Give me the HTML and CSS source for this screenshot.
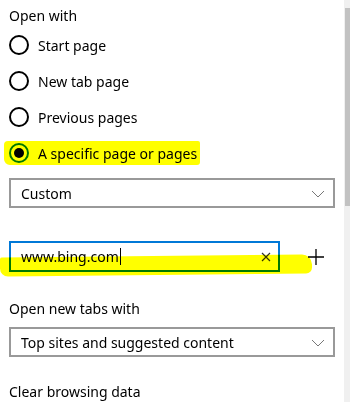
FILE: index.html
```html
<!DOCTYPE html>
<html lang="en">

<head>
    <meta charset="UTF-8" />
    <title>Settings</title>
    <link rel="stylesheet" href="styles.css">
</head>

<body>
    <div class="panel">
        <div class="label first">Open with</div>

        <div class="radio-row">
            <span class="radio"></span>
            <span>Start page</span>
        </div>
        <div class="radio-row">
            <span class="radio"></span>
            <span>New tab page</span>
        </div>
        <div class="radio-row">
            <span class="radio"></span>
            <span>Previous pages</span>
        </div>
        <div class="radio-row marked">
            <span class="radio checked"></span>
            <span>A specific page or pages</span>
            <span class="marker marker-radio"></span>
        </div>

        <div class="select">
            <span>Custom</span>
            <svg class="chevron" width="14" height="8" viewBox="0 0 14 8">
                <polyline points="1,1 7,7 13,1" fill="none" stroke="#777" stroke-width="1" />
            </svg>
        </div>

        <div class="url-row">
            <div class="url-input">
                <span class="url-text">www.bing.com</span><span class="caret"></span>
                <svg class="clear" width="10" height="10" viewBox="0 0 10 10">
                    <path d="M1 1 L9 9 M9 1 L1 9" stroke="#333" stroke-width="1.2" />
                </svg>
            </div>
            <svg class="plus" width="16" height="16" viewBox="0 0 16 16">
                <path d="M8 0 V16 M0 8 H16" stroke="#000" stroke-width="1.3" />
            </svg>
            <span class="marker marker-url"></span>
        </div>

        <div class="label tabs">Open new tabs with</div>
        <div class="select">
            <span>Top sites and suggested content</span>
            <svg class="chevron" width="14" height="8" viewBox="0 0 14 8">
                <polyline points="1,1 7,7 13,1" fill="none" stroke="#777" stroke-width="1" />
            </svg>
        </div>

        <div class="label last">Clear browsing data</div>
    </div>

    <div class="scrollbar">
        <div class="thumb"></div>
    </div>
</body>

</html>
```

FILE: styles.css
```css
body {
    font-family: "Noto Sans", sans-serif;
    font-size: 14px;
    color: #000;
    margin: 0;
    background: #fff;
    overflow: hidden;
}

.panel {
    width: 326px;
    padding-left: 9px;
}

.label {
    height: 20px;
    line-height: 20px;
}

.label.first {
    margin-top: 6px;
    margin-bottom: 1px;
}

.label.tabs {
    margin-top: 27px;
    margin-bottom: 8px;
}

.label.last {
    margin-top: 25px;
}

.radio-row {
    position: relative;
    display: flex;
    align-items: center;
    gap: 9px;
    height: 36px;
}

.radio {
    width: 16px;
    height: 16px;
    border: 2px solid #000;
    border-radius: 50%;
    display: flex;
    align-items: center;
    justify-content: center;
    box-sizing: content-box;
}

.radio.checked {
    border-color: #0078d7;
}

.radio.checked::after {
    content: "";
    width: 10px;
    height: 10px;
    border-radius: 50%;
    background: #000;
}

.select {
    height: 26px;
    border: 2px solid #999;
    margin-top: 7px;
    display: flex;
    align-items: center;
    justify-content: space-between;
    padding: 0 8px 0 10px;
}

.chevron {
    margin-top: 1px;
}

.url-row {
    position: relative;
    display: flex;
    align-items: center;
    margin-top: 33px;
}

.url-input {
    width: 257px;
    height: 27px;
    border: 2px solid #0078d7;
    display: flex;
    align-items: center;
    padding-left: 10px;
}

.caret {
    width: 1px;
    height: 17px;
    background: #000;
    margin-left: 1px;
}

.clear {
    margin-left: auto;
    margin-right: 7px;
}

.plus {
    margin-left: 28px;
}

.marker {
    position: absolute;
    background: #ffff00;
    mix-blend-mode: multiply;
    pointer-events: none;
}

.marker-radio {
    left: -5px;
    top: 6px;
    width: 196px;
    height: 24px;
    border-radius: 4px 2px 3px 6px;
}

.marker-url {
    left: -9px;
    top: 15px;
    width: 312px;
    height: 19px;
    border-radius: 2px 10px 6px 8px;
    transform: rotate(-0.6deg);
}

.scrollbar {
    position: fixed;
    top: 0;
    right: 0;
    width: 6px;
    height: 100%;
    background: #f0f0f0;
}

.thumb {
    margin-top: 8px;
    margin-left: 1px;
    height: 198px;
    background: #c2c2c2;
}
```
